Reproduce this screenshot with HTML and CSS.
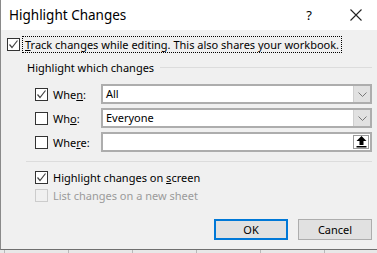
FILE: index.html
```html
<!doctype html>
<html lang="en">
  <head>
    <meta charset="UTF-8" />
    <title>Highlight Changes</title>
    <link rel="stylesheet" href="styles.css">
  </head>
  <body>
    <div class="dialog">
      <div class="titlebar">
        <span class="title">Highlight Changes</span>
        <span class="help">?</span>
        <svg class="close" width="12" height="12" viewBox="0 0 12 12"><path d="M0.5 0.5 L11.5 11.5 M11.5 0.5 L0.5 11.5" stroke="#222" stroke-width="1.1" fill="none"/></svg>
      </div>
      <div class="content">
        <div class="track">
          <span class="box checked"><svg width="11" height="11" viewBox="0 0 11 11"><path d="M1.5 5.5 L4 8.5 L9.5 1.5" stroke="#444" stroke-width="1.2" fill="none"/></svg></span>
          <span class="focus"><u>T</u>rack changes while editing. This also shares your workbook.</span>
        </div>

        <div class="group">
          <div class="legend"><span>Highlight which changes</span><span class="rule"></span></div>
          <div class="row">
            <span class="box checked"><svg width="11" height="11" viewBox="0 0 11 11"><path d="M1.5 5.5 L4 8.5 L9.5 1.5" stroke="#444" stroke-width="1.2" fill="none"/></svg></span>
            <span class="label">Whe<u>n</u>:</span>
            <div class="field">
              <span class="value">All</span>
              <span class="drop"><svg width="9" height="5" viewBox="0 0 9 5"><path d="M0.5 0.5 L4.5 4.5 L8.5 0.5" stroke="#777" fill="none"/></svg></span>
            </div>
          </div>
          <div class="row">
            <span class="box"></span>
            <span class="label">Wh<u>o</u>:</span>
            <div class="field">
              <span class="value">Everyone</span>
              <span class="drop"><svg width="9" height="5" viewBox="0 0 9 5"><path d="M0.5 0.5 L4.5 4.5 L8.5 0.5" stroke="#777" fill="none"/></svg></span>
            </div>
          </div>
          <div class="row">
            <span class="box"></span>
            <span class="label">Whe<u>r</u>e:</span>
            <div class="field">
              <span class="value"></span>
              <span class="pick"><svg width="11" height="12" viewBox="0 0 11 12"><path d="M5.5 0 L10.5 5 L7.5 5 L7.5 9 L3.5 9 L3.5 5 L0.5 5 Z" fill="#000"/><rect x="0.5" y="10" width="10" height="1.5" fill="#000"/></svg></span>
            </div>
          </div>
        </div>

        <div class="separator"></div>

        <div class="option">
          <span class="box checked"><svg width="11" height="11" viewBox="0 0 11 11"><path d="M1.5 5.5 L4 8.5 L9.5 1.5" stroke="#444" stroke-width="1.2" fill="none"/></svg></span>
          <span>Highlight changes on <u>s</u>creen</span>
        </div>
        <div class="option disabled">
          <span class="box"></span>
          <span>List changes on a new sheet</span>
        </div>

        <div class="buttons">
          <button class="default">OK</button>
          <button>Cancel</button>
        </div>
      </div>
    </div>
    <div class="sheet">
      <span></span><span></span><span></span><span></span><span></span><span></span>
    </div>
  </body>
</html>
```

FILE: styles.css
```css
body {
  margin: 0;
  background-color: #f4f4f4;
  font-family: "Noto Sans", Arial, sans-serif;
  font-size: 11px;
  color: #000;
  overflow: hidden;
}

.dialog {
  width: 376px;
  height: 249px;
  background-color: #f0f0f0;
  border-left: 1px solid #8a8a8a;
  border-bottom: 1px solid #6f6f6f;
  overflow: hidden;
}

.titlebar {
  height: 30px;
  background-color: white;
  display: flex;
  align-items: center;
}

.title {
  margin-left: 8px;
  font-size: 13.5px;
  color: #000;
}

.help {
  margin-left: auto;
  margin-right: 38px;
  font-size: 13px;
}

.close {
  margin-right: 15px;
}

.content {
  padding: 6px 5px 0 6px;
}

.box {
  width: 11px;
  height: 11px;
  border: 1px solid #333;
  background-color: white;
  display: inline-flex;
  align-items: center;
  justify-content: center;
  flex-shrink: 0;
}

.track {
  display: flex;
  align-items: center;
  height: 16px;
}

.focus {
  margin-left: 3px;
  padding: 0 2px;
  outline: 1px dotted #000;
  line-height: 15px;
}

.group {
  margin-top: 8px;
  padding-left: 20px;
}

.legend {
  display: flex;
  align-items: center;
  height: 14px;
}

.rule {
  flex: 1;
  height: 1px;
  background-color: #dcdcdc;
  margin-left: 6px;
}

.row {
  display: flex;
  align-items: center;
  height: 20px;
  margin-top: 4px;
  padding-left: 8px;
}

.legend + .row {
  margin-top: 10px;
}

.label {
  margin-left: 5px;
  width: 48px;
}

.field {
  flex: 1;
  height: 16px;
  border: 2px solid #adadad;
  background-color: white;
  display: flex;
  align-items: stretch;
}

.value {
  flex: 1;
  padding-left: 3px;
  line-height: 16px;
}

.drop {
  width: 16px;
  background-color: #e1e1e1;
  border-left: 1px solid #cfcfcf;
  display: flex;
  align-items: center;
  justify-content: center;
}

.pick {
  width: 14px;
  background-color: white;
  border: 1px solid #9a9a9a;
  margin: 1px;
  display: flex;
  align-items: center;
  justify-content: center;
}

.separator {
  height: 1px;
  background-color: #dcdcdc;
  margin: 9px 0 0 19px;
}

.option {
  display: flex;
  align-items: center;
  height: 16px;
  margin-top: 7px;
  padding-left: 28px;
}

.option .box {
  margin-right: 5px;
}

.option.disabled {
  margin-top: 2px;
  color: #9b9b9b;
}

.option.disabled .box {
  border-color: #cccccc;
  background-color: #f0f0f0;
}

.buttons {
  display: flex;
  justify-content: flex-end;
  gap: 10px;
  margin-top: 16px;
}

button {
  width: 74px;
  height: 21px;
  font-family: "Noto Sans", Arial, sans-serif;
  font-size: 11px;
  background-color: #e1e1e1;
  border: 1px solid #adadad;
  padding: 0;
  color: #000;
}

button.default {
  border: 2px solid #0078d7;
}

.sheet {
  display: flex;
  height: 3px;
  background-color: #e8e8e8;
  overflow: hidden;
}

.sheet span {
  width: 63px;
  flex-shrink: 0;
  border-right: 1px solid #b8b8b8;
}

.sheet span:first-child {
  width: 4px;
}
```
